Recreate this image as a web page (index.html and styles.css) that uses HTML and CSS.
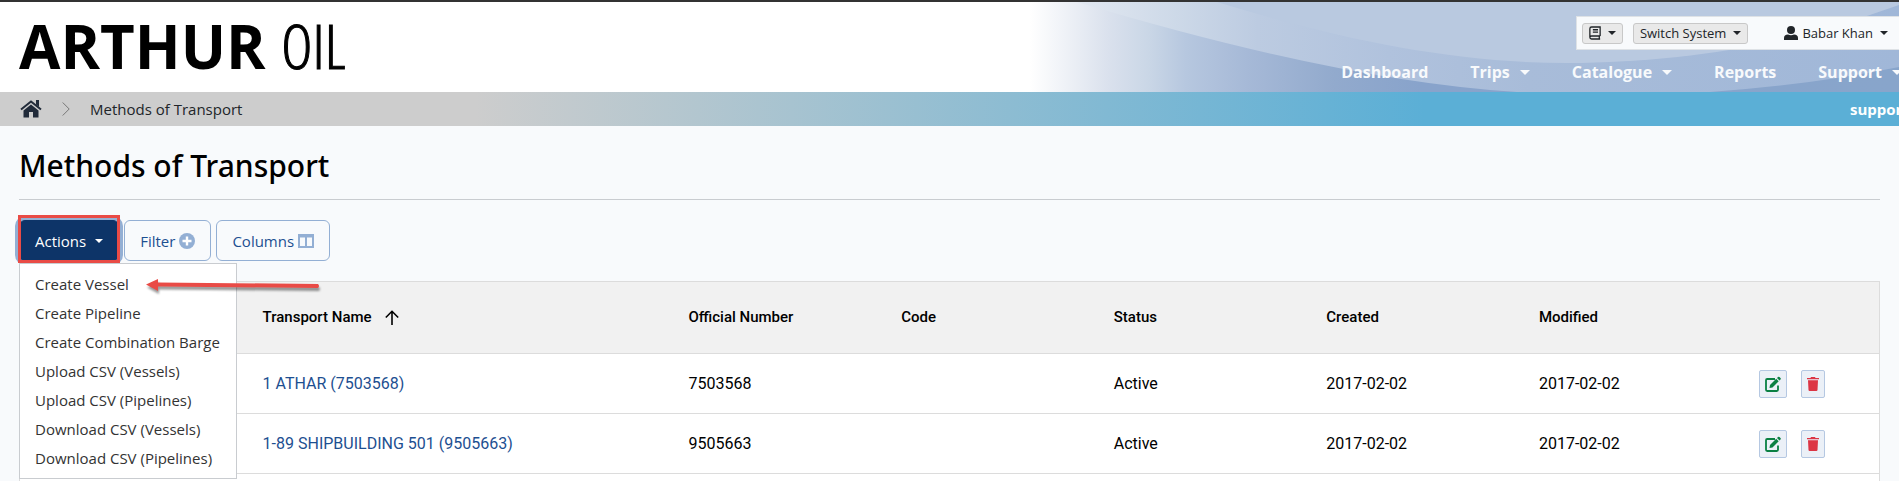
FILE: index.html
```html
<!DOCTYPE html>
<html lang="en">
<head>
    <meta charset="UTF-8">
    <meta name="viewport" content="width=device-width, initial-scale=1.0">
    <title>Methods of Transport</title>
    <link rel="stylesheet" href="styles.css">
</head>
<body>

    <!-- shared icons -->
    <svg class="sprite" aria-hidden="true">
        <symbol id="icon-edit" viewBox="0 0 16 16">
            <path d="M10 3H2.2Q1 3 1 4.200V13.800Q1 15 2.200 15H11.800Q13 15 13 13.800V9.500" fill="none" stroke="currentColor" stroke-width="1.800"/>
            <path d="M5 9 11.200 2.800 13.700 5.300 7.500 11.500 4.500 12ZM12 2 13 1Q13.700.4 14.400 1L15.500 2.100Q16.100 2.800 15.500 3.500L14.500 4.500Z" fill="currentColor"/>
        </symbol>
        <symbol id="icon-trash" viewBox="0 0 12 16">
            <path d="M0 2H3.500L4 1H8L8.500 2H12V3.200H0ZM1 4.200H11L10.500 14Q10.400 15 9.400 15H2.600Q1.600 15 1.500 14Z" fill="currentColor"/>
        </symbol>
    </svg>

    <header class="header">
        <svg class="header-art" viewBox="0 0 869 90" preserveAspectRatio="none" aria-hidden="true">
            <defs>
                <linearGradient id="fade">
                    <stop offset="0" stop-color="#fff"/>
                    <stop offset=".04" stop-color="#eff2f7"/>
                    <stop offset=".09" stop-color="#dae1ed"/>
                    <stop offset=".138" stop-color="#c9d6e6"/>
                    <stop offset=".18" stop-color="#b6c7df"/>
                    <stop offset=".25" stop-color="#a6b9d7"/>
                    <stop offset=".35" stop-color="#92aacd"/>
                    <stop offset=".45" stop-color="#88a3cb"/>
                    <stop offset="1" stop-color="#88a5cb"/>
                </linearGradient>
                <linearGradient id="band">
                    <stop offset="0" stop-color="#e2e8f1"/>
                    <stop offset=".12" stop-color="#cdd9e8"/>
                    <stop offset=".22" stop-color="#bccbe1"/>
                    <stop offset=".38" stop-color="#b0c2dd"/>
                    <stop offset=".55" stop-color="#a8bcd9"/>
                    <stop offset="1" stop-color="#a0b7d8"/>
                </linearGradient>
            </defs>
            <rect width="869" height="90" fill="url(#fade)"/>
            <path d="M47 0Q310 79 487 90H680Q780 83 869 65V0Z" fill="url(#band)"/>
            <path d="M187 0C310 38 425 61 537 61C660 60 760 42 869 3V0Z" fill="#b9c9e0"/>
        </svg>
        <div class="logo"><strong>ARTHUR</strong> <span>OIL</span></div>
        <div class="header-right">
            <div class="user-bar">
                <button class="small-button" aria-label="Guides">
                    <svg width="12" height="14" viewBox="0 0 14 16" fill="none" stroke="currentColor" stroke-width="1.500" aria-hidden="true">
                        <path d="M13 11.500V1H3Q1 1 1 3V13Q1 15 3 15H13M1 13Q1 11.500 3 11.500H13M12 11.500V15M4.500 4.200H10.500M4.500 7H10.500"/>
                    </svg>
                    <i class="caret"></i>
                </button>
                <button class="small-button">Switch System <i class="caret"></i></button>
                <button class="user-button">
                    <svg width="14" height="14" viewBox="0 0 14 14" fill="currentColor" aria-hidden="true">
                        <circle cx="7" cy="4" r="4"/>
                        <path d="M0 14V12Q0 8.800 4 8.500Q7 10 10 8.500Q14 8.800 14 12V14Z"/>
                    </svg>
                    Babar Khan <i class="caret"></i>
                </button>
            </div>
            <nav class="main-nav">
                <a href="#">Dashboard</a>
                <a href="#">Trips <i class="caret"></i></a>
                <a href="#">Catalogue <i class="caret"></i></a>
                <a href="#">Reports</a>
                <a href="#">Support <i class="caret"></i></a>
            </nav>
        </div>
    </header>

    <div class="breadcrumb">
        <a href="#" aria-label="Home">
            <svg width="22" height="18" viewBox="0 0 22 18" aria-hidden="true">
                <path d="M1 9.500 11 1.500 21 9.500" fill="none" stroke="currentColor" stroke-width="2"/>
                <path d="M16 0H19V7L16 4.500ZM11 4.500 18.500 10.500V17.500H13V12H9V17.500H3.500V10.500Z" fill="currentColor"/>
            </svg>
        </a>
        <svg class="chevron" width="8" height="14" viewBox="0 0 8 14" aria-hidden="true">
            <path d="M.7.500 7.200 7 .7 13.500" fill="none" stroke="currentColor"/>
        </svg>
        <span>Methods of Transport</span>
        <a class="support-link" href="#">support</a>
    </div>

    <main>
        <h1>Methods of Transport</h1>

        <div class="toolbar">
            <div class="dropdown">
                <button class="button button-active">Actions <i class="caret"></i></button>
                <ul class="menu">
                    <li><a href="#">Create Vessel</a></li>
                    <li><a href="#">Create Pipeline</a></li>
                    <li><a href="#">Create Combination Barge</a></li>
                    <li><a href="#">Upload CSV (Vessels)</a></li>
                    <li><a href="#">Upload CSV (Pipelines)</a></li>
                    <li><a href="#">Download CSV (Vessels)</a></li>
                    <li><a href="#">Download CSV (Pipelines)</a></li>
                </ul>
                <svg class="arrow" width="176" height="18" viewBox="0 0 176 18" aria-hidden="true">
                    <path d="M12 5.500 172 7Q174 9 172 11L12 9.500V14L0 7.500 12 2Z" fill="#e94b46"/>
                </svg>
            </div>
            <button class="button">Filter
                <svg width="16" height="16" viewBox="0 0 16 16" aria-hidden="true">
                    <circle cx="8" cy="8" r="8" fill="#93afd4"/>
                    <path d="M8 3.500V12.500M3.500 8H12.500" stroke="#fff" stroke-width="2.400"/>
                </svg>
            </button>
            <button class="button">Columns
                <svg width="16" height="14" viewBox="0 0 16 14" aria-hidden="true">
                    <path d="M1 1H15V13H1ZM8 1V13M1 2.500H15" fill="none" stroke="#93afd4" stroke-width="2"/>
                </svg>
            </button>
        </div>

        <table class="transports">
            <thead>
                <tr>
                    <th></th>
                    <th class="col-name">Transport Name
                        <svg width="14" height="15" viewBox="0 0 14 15" aria-hidden="true">
                            <path d="M7 15V1.500M.8 7.500 7 1.300 13.200 7.500" fill="none" stroke="currentColor" stroke-width="1.600"/>
                        </svg>
                    </th>
                    <th class="col">Official Number</th>
                    <th class="col">Code</th>
                    <th class="col">Status</th>
                    <th class="col">Created</th>
                    <th class="col">Modified</th>
                    <th class="col-tools"></th>
                </tr>
            </thead>
            <tbody>
                <tr>
                    <td></td>
                    <td><a href="#">1 ATHAR (7503568)</a></td>
                    <td>7503568</td>
                    <td></td>
                    <td>Active</td>
                    <td>2017-02-02</td>
                    <td>2017-02-02</td>
                    <td>
                        <div class="tools">
                            <button class="tool edit" aria-label="Edit"><svg width="16" height="16"><use href="#icon-edit"/></svg></button>
                            <button class="tool delete" aria-label="Delete"><svg width="12" height="16"><use href="#icon-trash"/></svg></button>
                        </div>
                    </td>
                </tr>
                <tr>
                    <td></td>
                    <td><a href="#">1-89 SHIPBUILDING 501 (9505663)</a></td>
                    <td>9505663</td>
                    <td></td>
                    <td>Active</td>
                    <td>2017-02-02</td>
                    <td>2017-02-02</td>
                    <td>
                        <div class="tools">
                            <button class="tool edit" aria-label="Edit"><svg width="16" height="16"><use href="#icon-edit"/></svg></button>
                            <button class="tool delete" aria-label="Delete"><svg width="12" height="16"><use href="#icon-trash"/></svg></button>
                        </div>
                    </td>
                </tr>
                <tr>
                    <td colspan="8"></td>
                </tr>
            </tbody>
        </table>
    </main>

</body>
</html>
```
FILE: styles.css
```css
* {
    box-sizing: border-box;
}

body {
    margin: 0;
    height: 100vh;
    overflow: hidden;
    background-color: #f8fafc;
    color: #212529;
    font-family: "Open Sans", "Noto Sans", sans-serif;
    font-size: 15px;
}

a {
    color: inherit;
    text-decoration: none;
}

button {
    font-family: inherit;
    color: inherit;
    cursor: pointer;
}

.sprite {
    display: none;
}

.caret {
    display: inline-block;
    border: 5px solid transparent;
    border-top-color: currentColor;
    border-bottom: 0;
}

/* header */
.header {
    position: relative;
    display: flex;
    justify-content: space-between;
    height: 92px;
    border-top: 2px solid #333;
    background-color: #fff;
    overflow: hidden;
}

.header-art {
    position: absolute;
    top: 0;
    right: 0;
    width: 869px;
    height: 90px;
}

.logo {
    padding-left: 19px;
    color: #000;
    font-size: 60px;
    line-height: 88px;
    white-space: nowrap;
}

.logo strong {
    font-weight: 700;
}

.logo span {
    font-family: "Open Sans Condensed Light", "Roboto Condensed", Roboto, sans-serif;
    font-weight: 300;
    -webkit-text-stroke: 1px #000;
}

.header-right {
    position: relative;
    display: flex;
    flex-direction: column;
    align-items: flex-end;
    padding-top: 14px;
}

.user-bar {
    display: flex;
    align-items: center;
    height: 34px;
    padding: 0 11px 0 5px;
    border: 1px solid #dee2e6;
    border-right: 0;
    background-color: #f8fafc;
}

.small-button {
    display: flex;
    align-items: center;
    gap: 7px;
    height: 21px;
    margin-right: 10px;
    padding: 0 6px;
    border: 1px solid #c8c8c8;
    border-radius: 3px;
    background-color: #e9e9e9;
    font-size: 13px;
}

.small-button .caret,
.user-button .caret {
    border-width: 4px 4px 0;
}

.user-button {
    display: flex;
    align-items: center;
    gap: 4px;
    margin-left: 26px;
    padding: 0;
    border: 0;
    background: none;
    font-size: 13px;
}

.user-button .caret {
    margin-left: 3px;
}

.main-nav {
    display: flex;
    gap: 42px;
    margin-right: -3px;
    padding-top: 10px;
    color: #f8fafc;
    font-size: 16px;
    font-weight: 700;
    line-height: 24px;
}

.main-nav a {
    display: flex;
    align-items: center;
    gap: 10px;
}

/* breadcrumb */
.breadcrumb {
    display: flex;
    align-items: center;
    height: 34px;
    padding-left: 20px;
    background: linear-gradient(to right, #cdcdcd 25%, #5bafd6 75%);
    white-space: nowrap;
}

.breadcrumb a {
    display: flex;
    color: #212b3a;
}

.chevron {
    margin: 0 20px;
    color: #777;
}

.breadcrumb .support-link {
    width: 49px;
    margin-left: auto;
    overflow: hidden;
    color: #fff;
    font-weight: 700;
}

/* page */
main {
    padding: 0 19px;
}

h1 {
    margin: 0 0 20px;
    padding: 20px 0 14px;
    border-bottom: 1px solid #c9ccd0;
    color: #000;
    font-family: "Noto Sans", "Open Sans", sans-serif;
    font-size: 30px;
    font-weight: 500;
    line-height: 39px;
}

.toolbar {
    display: flex;
    gap: 5px;
    margin-bottom: 20px;
}

.dropdown {
    position: relative;
}

.button {
    display: flex;
    align-items: center;
    gap: 4px;
    height: 41px;
    padding: 0 15px;
    border: 1px solid #93afd4;
    border-radius: 6px;
    background-color: #f8fafc;
    color: #1d4f91;
    font-size: 15px;
}

.button-active {
    gap: 9px;
    border-color: #0d3468;
    background-color: #0d3468;
    color: #fff;
    box-shadow: 0 0 0 4px #93afd4;
}

.button-active .caret {
    border-width: 4px 4px 0;
}

/* red frame round the open button */
.dropdown::before {
    content: "";
    position: absolute;
    inset: -5px -1px -2px;
    z-index: 2;
    border: 3px solid #e94b46;
    pointer-events: none;
}

.menu {
    position: absolute;
    top: 43px;
    left: 0;
    z-index: 1;
    width: 218px;
    margin: 0;
    padding: 6px 0 5px;
    border: 1px solid #c9ccd0;
    background-color: #fff;
    color: #333;
    list-style: none;
}

.menu a {
    display: block;
    padding: 0 15px;
    line-height: 29px;
    white-space: nowrap;
}

.arrow {
    position: absolute;
    top: 57px;
    left: 127px;
    z-index: 2;
    filter: drop-shadow(1px 3px 1px rgba(0, 0, 0, 0.4));
}

/* table */
.transports {
    width: 100%;
    border: 1px solid #dcdcdc;
    border-collapse: collapse;
    table-layout: fixed;
    background-color: #fff;
    color: #000;
    font-family: Roboto, sans-serif;
    font-size: 16px;
}

.transports th,
.transports td {
    height: 60px;
    padding: 0 16px;
    border-bottom: 1px solid #dcdcdc;
    text-align: left;
    white-space: nowrap;
}

.transports th {
    height: 72px;
    padding-bottom: 2px;
    background-color: #f1f1f1;
    font-size: 15px;
    font-weight: 500;
}

.transports th svg {
    margin-left: 10px;
    vertical-align: middle;
}

.transports td a {
    color: #1d4f91;
}

.col-name {
    width: 22.9%;
}

.col {
    width: 11.43%;
}

.col-tools {
    width: 144px;
}

.tools {
    display: flex;
    gap: 14px;
    padding-left: 7px;
}

.tool {
    display: flex;
    align-items: center;
    justify-content: center;
    width: 28px;
    height: 28px;
    padding: 0;
    border: 1px solid #b5c8e2;
    border-radius: 2px;
    background-color: #ebf0f7;
}

.edit {
    color: #0b8043;
}

.delete {
    width: 24px;
    color: #dc3545;
}
```
